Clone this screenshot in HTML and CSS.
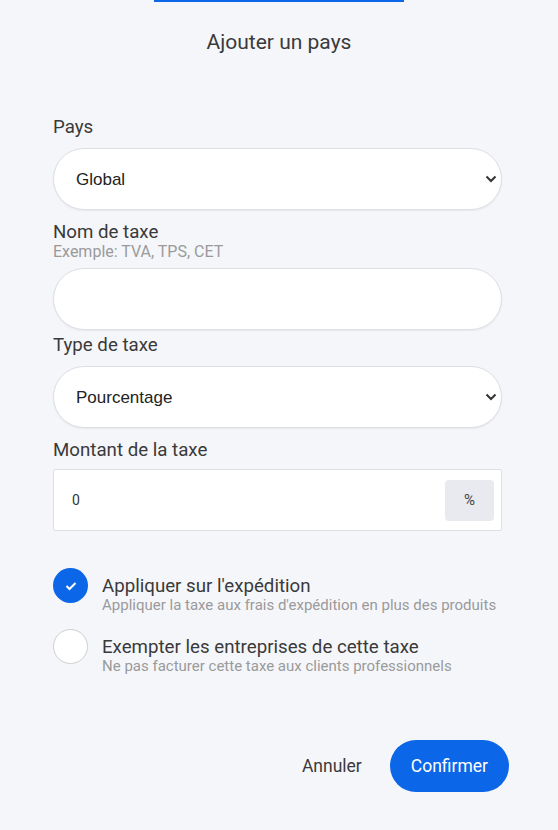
FILE: index.html
```html
<!DOCTYPE html>
<html lang="fr">
<head>
    <meta charset="UTF-8">
    <meta name="viewport" content="width=device-width, initial-scale=1.0">
    <title>Ajouter un pays</title>
    <link rel="stylesheet" href="styles.css">
</head>
<body>
    <!-- Header -->
    <div class="modal-head">
        <div class="tab-bar"></div>
        <h1 class="modal-title">Ajouter un pays</h1>
    </div>

    <!-- Form -->
    <form class="tax-form">
        <label class="field-label label-pays" for="country">Pays</label>
        <div class="select-wrap">
            <select id="country" class="field-select">
                <option>Global</option>
            </select>
            <svg class="chevron" width="12" height="8" viewBox="0 0 12 8"><path d="M1.5 1.5 L6 6 L10.5 1.5" fill="none" stroke="#333" stroke-width="2"/></svg>
        </div>

        <label class="field-label label-name" for="taxName">Nom de taxe</label>
        <div class="field-hint">Exemple: TVA, TPS, CET</div>
        <input type="text" id="taxName" class="field-input">

        <label class="field-label label-type" for="taxType">Type de taxe</label>
        <div class="select-wrap">
            <select id="taxType" class="field-select">
                <option>Pourcentage</option>
            </select>
            <svg class="chevron" width="12" height="8" viewBox="0 0 12 8"><path d="M1.5 1.5 L6 6 L10.5 1.5" fill="none" stroke="#333" stroke-width="2"/></svg>
        </div>

        <label class="field-label label-amount" for="taxAmount">Montant de la taxe</label>
        <div class="amount-box">
            <input type="text" id="taxAmount" class="amount-input" value="0">
            <span class="amount-unit">%</span>
        </div>

        <div class="check-list">
            <div class="check-row">
                <span class="check-circle checked">
                    <svg width="12" height="10" viewBox="0 0 12 10"><path d="M1.5 5 L4.5 8 L10.5 2" fill="none" stroke="#fff" stroke-width="2"/></svg>
                </span>
                <div class="check-text">
                    <div class="check-title">Appliquer sur l'expédition</div>
                    <div class="check-sub">Appliquer la taxe aux frais d'expédition en plus des produits</div>
                </div>
            </div>
            <div class="check-row">
                <span class="check-circle"></span>
                <div class="check-text">
                    <div class="check-title">Exempter les entreprises de cette taxe</div>
                    <div class="check-sub">Ne pas facturer cette taxe aux clients professionnels</div>
                </div>
            </div>
        </div>
    </form>

    <!-- Footer -->
    <div class="modal-actions">
        <button type="button" class="btn-cancel">Annuler</button>
        <button type="button" class="btn-confirm">Confirmer</button>
    </div>
</body>
</html>
```

FILE: styles.css
```css
body {
    margin: 0;
    background-color: #f5f6fa;
    font-family: Roboto, "Liberation Sans", sans-serif;
    color: #333;
    height: 830px;
    overflow: hidden;
}

.modal-head {
    display: flex;
    flex-direction: column;
    align-items: center;
}

.tab-bar {
    width: 250px;
    height: 2px;
    background-color: #0b66e8;
}

.modal-title {
    margin: 28px 0 0;
    font-size: 21px;
    font-weight: 400;
    line-height: 25px;
    text-align: center;
    color: #3a3a3a;
}

.tax-form {
    padding: 0 56px 0 53px;
    display: flex;
    flex-direction: column;
}

.field-label {
    display: block;
    font-size: 18.7px;
    line-height: 22px;
    color: #3a3a3a;
}

.label-pays {
    margin: 61px 0 10px;
}

.label-name {
    margin-top: 11px;
}

.label-type {
    margin: 4px 0 10px;
}

.label-amount {
    margin: 11px 0 8px;
}

.field-hint {
    margin: 0 0 7px;
    font-size: 16px;
    line-height: 18px;
    color: #9a9a9a;
}

.select-wrap {
    position: relative;
}

.field-select,
.field-input {
    display: block;
    width: 100%;
    box-sizing: border-box;
    height: 62px;
    margin: 0;
    border: 1px solid #dedfe3;
    border-radius: 31px;
    background-color: #fff;
    box-shadow: 0 1px 2px rgba(0,0,0,0.06);
    outline: none;
}

.field-select {
    appearance: none;
    -webkit-appearance: none;
    padding: 0 40px 0 22px;
    font-family: "Liberation Sans", Arial, sans-serif;
    font-size: 17px;
    color: #222;
}

.chevron {
    position: absolute;
    right: 5px;
    top: 27px;
    pointer-events: none;
}

.field-input {
    padding: 0 22px;
    font-size: 16px;
}

.amount-box {
    display: flex;
    align-items: center;
    height: 62px;
    box-sizing: border-box;
    padding: 0 7px 0 18px;
    background-color: #fff;
    border: 1px solid #dedfe3;
    border-radius: 2px;
}

.amount-input {
    flex: 1;
    border: none;
    outline: none;
    padding: 0;
    font-family: Roboto, sans-serif;
    font-size: 14px;
    color: #333;
    background: transparent;
}

.amount-unit {
    width: 49px;
    height: 41px;
    display: flex;
    align-items: center;
    justify-content: center;
    background-color: #e9eaef;
    border-radius: 4px;
    font-size: 15px;
    color: #444;
}

.check-list {
    margin-top: 37px;
    display: flex;
    flex-direction: column;
    gap: 15px;
}

.check-row {
    display: flex;
    align-items: flex-start;
    gap: 14px;
}

.check-circle {
    flex: none;
    width: 35px;
    height: 35px;
    box-sizing: border-box;
    border-radius: 50%;
    border: 1px solid #cfcfcf;
    background-color: #fff;
    display: flex;
    align-items: center;
    justify-content: center;
}

.check-circle.checked {
    border: none;
    background-color: #0b66e8;
}

.check-text {
    margin-top: 7px;
}

.check-title {
    font-size: 18.7px;
    line-height: 22px;
    color: #3a3a3a;
}

.check-sub {
    font-size: 15px;
    line-height: 17px;
    color: #9a9a9a;
}

.modal-actions {
    display: flex;
    justify-content: flex-end;
    align-items: center;
    gap: 14px;
    padding-right: 49px;
    margin-top: 65px;
}

.btn-cancel {
    background: none;
    border: none;
    padding: 0 14px;
    font-family: Roboto, sans-serif;
    font-size: 17.5px;
    color: #3a3a3a;
    cursor: pointer;
}

.btn-confirm {
    height: 52px;
    padding: 0 21px;
    border: none;
    border-radius: 26px;
    background-color: #0b66e8;
    color: #fff;
    font-family: Roboto, sans-serif;
    font-size: 17.5px;
    font-weight: 400;
    cursor: pointer;
}
```
